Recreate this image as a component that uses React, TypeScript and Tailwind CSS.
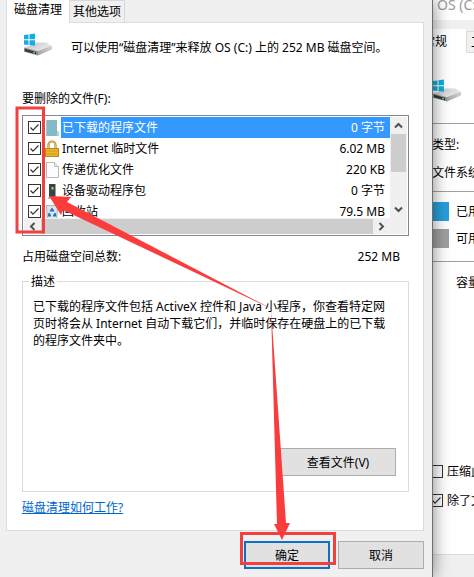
import React from 'react';

interface CleanupItem {
  id: string;
  name: string;
  size: string;
  icon: React.ReactNode;
  selected?: boolean;
}

const DriveIcon: React.FC = () => (
  <svg width="30" height="24" viewBox="0 0 30 24" className="shrink-0" aria-hidden="true">
    <defs>
      <linearGradient id="driveTop" x1="0" y1="0" x2="1" y2="0.6">
        <stop offset="0" stopColor="#c2c2c4" />
        <stop offset="1" stopColor="#ececee" />
      </linearGradient>
      <linearGradient id="driveSide" x1="0" y1="0" x2="1" y2="0">
        <stop offset="0" stopColor="#a2a2a4" />
        <stop offset="1" stopColor="#d0d0d2" />
      </linearGradient>
    </defs>
    <path d="M2 15 L14 9.500 H24 L30 13 L17 19 Z" fill="url(#driveTop)" />
    <path d="M15 18.500 L30 12.800 V16.500 L16 22.500 Z" fill="url(#driveSide)" />
    <path d="M2 14.500 L16 18.300 V22.500 L2 18.800 Z" fill="#8d8e90" />
    <path d="M3 15.800 L14 18.900 V21.300 L3 18.200 Z" fill="#333537" />
    <rect x="11" y="18.800" width="2" height="1.600" fill="#58c27a" />
    <path d="M2 2 L6.500 1.400 V6.300 H2 Z M7.500 1.200 L13 0.500 V6.300 H7.500 Z M2 7.300 H6.500 V12 L2 11.400 Z M7.500 7.300 H13 V12.800 L7.500 12.100 Z" fill="#12aee0" />
  </svg>
);

const FolderIcon = () => (
  <svg width="14" height="18" viewBox="0 0 14 18" aria-hidden="true">
    <path d="M1 1 H12 V12 L13.500 13 V17 H1 Z" fill="#83b9c4" />
    <path d="M12 11.500 L13.500 13 V17 H11.500 Z" fill="#a5cfd6" />
    <path d="M1.500 1 V17" stroke="#9bc9d1" />
  </svg>
);

const LockIcon = () => (
  <svg width="14" height="18" viewBox="0 0 14 18" aria-hidden="true">
    <path d="M3.500 9 V5 A3.500 3.500 0 0 1 10.500 5 V9" fill="none" stroke="#b0893a" strokeWidth="2.200" />
    <path d="M3.500 9 V5 A3.500 3.500 0 0 1 10.500 5 V9" fill="none" stroke="#e8cf8a" strokeWidth="0.800" />
    <rect x="0.500" y="8.500" width="13" height="8" fill="#edb92a" stroke="#b98a14" />
    <path d="M1 11 H13 M1 14 H13" stroke="#cf9a1c" />
  </svg>
);

const PageIcon = () => (
  <svg width="14" height="18" viewBox="0 0 14 18" aria-hidden="true">
    <path d="M1.500 1.500 H9.500 L13.500 5.500 V16.500 H1.500 Z" fill="#fcfcfc" stroke="#b8b8b8" />
    <path d="M9.500 1.500 V5.500 H13.500" fill="#eee" stroke="#b8b8b8" />
  </svg>
);

const DeviceIcon = () => (
  <svg width="14" height="18" viewBox="0 0 14 18" aria-hidden="true">
    <rect x="4" y="2" width="6.500" height="13" fill="#38443e" />
    <rect x="6.500" y="5" width="2" height="2.500" fill="#8fe0a4" />
    <path d="M3 16 H11" stroke="#777" />
  </svg>
);

const RecycleIcon = () => (
  <svg width="14" height="18" viewBox="0 0 14 18" aria-hidden="true">
    <path d="M1.500 2.500 H12.500 L11.800 16.500 H2.200 Z" fill="#dfe6ea" stroke="#a9b4bb" />
    <path d="M5.300 8.500 L7 6 L8.700 8.500 M10 10 L10.300 12.500 H8 M6 12.500 H3.700 L4.500 10" fill="none" stroke="#2374bd" strokeWidth="1.800" />
  </svg>
);

const cleanupItems: CleanupItem[] = [
  { id: 'downloaded', name: '已下载的程序文件', size: '0 字节', icon: <FolderIcon />, selected: true },
  { id: 'internet', name: 'Internet 临时文件', size: '6.02 MB', icon: <LockIcon /> },
  { id: 'delivery', name: '传递优化文件', size: '220 KB', icon: <PageIcon /> },
  { id: 'drivers', name: '设备驱动程序包', size: '0 字节', icon: <DeviceIcon /> },
  { id: 'recycle', name: '回收站', size: '79.5 MB', icon: <RecycleIcon /> },
];

const Checkbox: React.FC<{ id: string; checked?: boolean }> = ({ id, checked = false }) => (
  <span className="grid size-[13px] shrink-0">
    <input
      id={id}
      type="checkbox"
      defaultChecked={checked}
      className="peer col-start-1 row-start-1 size-[13px] appearance-none border border-[#333] bg-white"
    />
    <svg
      viewBox="0 0 13 13"
      className="pointer-events-none invisible col-start-1 row-start-1 size-[13px] peer-checked:visible"
      aria-hidden="true"
    >
      <path d="M2.500 6.500 L5 9.200 L10.500 3.500" fill="none" stroke="#333" strokeWidth="1.200" />
    </svg>
  </span>
);

const Chevron: React.FC<{ d: string }> = ({ d }) => (
  <svg width="9" height="9" viewBox="0 0 9 9" aria-hidden="true">
    <path d={d} fill="none" stroke="#505050" strokeWidth="2" />
  </svg>
);

const FileList = () => (
  <div className="flex h-[121px] flex-col border border-[#828790] p-px">
    <div className="flex min-h-0 flex-1">
      <ul className="min-w-0 flex-1 overflow-hidden">
        {cleanupItems.map((item) => (
          <li key={item.id} className="flex h-[21px] items-center pl-1">
            <Checkbox id={item.id} checked />
            <span className="ml-1 w-4 shrink-0">{item.icon}</span>
            <label
              htmlFor={item.id}
              className={`flex h-full flex-1 items-center justify-between pr-[5px] pl-px ${
                item.selected ? 'bg-[#3399ff] text-white' : ''
              }`}
            >
              <span>{item.name}</span>
              <span>{item.size}</span>
            </label>
          </li>
        ))}
      </ul>
      <div className="flex w-[17px] flex-col items-center justify-between bg-[#f0f0f0] pb-1">
        <button type="button" aria-label="向上滚动" className="flex h-[17px] items-center">
          <Chevron d="M1 6.500 L4.500 3 L8 6.500" />
        </button>
        <div className="mb-auto h-[38px] w-[15px] bg-[#cdcdcd]" />
        <button type="button" aria-label="向下滚动" className="flex h-[9px] items-center">
          <Chevron d="M1 2.500 L4.500 6 L8 2.500" />
        </button>
      </div>
    </div>
    <div className="flex h-4 items-center bg-[#f0f0f0] pr-[17px]">
      <button type="button" aria-label="向左滚动" className="flex w-[17px] justify-center">
        <Chevron d="M6.500 1 L3 4.500 L6.500 8" />
      </button>
      <div className="h-[15px] flex-1 bg-[#cdcdcd]" />
      <button type="button" aria-label="向右滚动" className="flex w-[17px] justify-center">
        <Chevron d="M2.500 1 L6 4.500 L2.500 8" />
      </button>
    </div>
  </div>
);

const CleanupDialog = () => (
  <main className="z-10 flex min-w-0 flex-1 flex-col border-r border-[#6e6e6e] bg-[#f0f0f0] pr-2 pl-[6px] shadow-[0_0_16px_rgba(0,0,0,0.5)]">
    <div role="tablist" className="flex h-[22px] items-end">
      <button
        type="button"
        role="tab"
        aria-selected="true"
        className="z-10 -mb-px h-[23px] border-l border-[#dcdcdc] bg-white px-[7px] pb-1"
      >
        磁盘清理
      </button>
      <button
        type="button"
        role="tab"
        aria-selected="false"
        className="h-[22px] border border-b-0 border-[#d9d9d9] bg-[#f0f0f0] px-[3px]"
      >
        其他选项
      </button>
    </div>

    <section className="flex h-[509px] flex-col border border-[#dcdcdc] bg-white pr-[14px] pl-[15px]">
      <div className="mt-[10px] flex items-center gap-[19px]">
        <DriveIcon />
        <p className="pt-1">可以使用“磁盘清理”来释放 OS (C:) 上的 252 MB 磁盘空间。</p>
      </div>

      <h2 className="mt-[33px] mb-2">要删除的文件(F):</h2>
      <FileList />

      <div className="mt-3 flex justify-between pr-[9px]">
        <span>占用磁盘空间总数:</span>
        <span>252 MB</span>
      </div>

      <fieldset className="mt-2 h-[219px] border border-[#dcdcdc] pr-3 pl-[10px]">
        <legend className="-ml-1 px-[2px]">描述</legend>
        <div className="mt-2 flex h-[178px] flex-col justify-between">
          <p className="whitespace-nowrap">
            已下载的程序文件包括 ActiveX 控件和 Java 小程序，你查看特定网
            <br />
            页时将会从 Internet 自动下载它们，并临时保存在硬盘上的已下载
            <br />
            的程序文件夹中。
          </p>
          <button
            type="button"
            className="h-7 w-[116px] shrink-0 self-end border border-[#adadad] bg-[#e1e1e1]"
          >
            查看文件(V)
          </button>
        </div>
      </fieldset>

      <a href="#help" className="mt-[7px] self-start text-[#0066cc] underline">
        磁盘清理如何工作?
      </a>
    </section>

    <div className="mt-[10px] flex justify-end gap-2">
      <button type="button" className="h-7 w-[86px] border-2 border-[#0f6fc6] bg-[#e1e1e1]">
        确定
      </button>
      <button type="button" className="h-7 w-[86px] border border-[#adadad] bg-[#e1e1e1]">
        取消
      </button>
    </div>
  </main>
);

// Properties window, mostly hidden behind the dialog
const PropertiesWindow = () => (
  <aside className="-ml-3 flex w-[53px] shrink-0 flex-col overflow-hidden bg-[#f0f0f0] whitespace-nowrap">
    <h1 className="h-5 bg-white pl-4 text-sm leading-[10px] text-[#999]">OS (C:)</h1>
    <div className="mt-[9px] flex h-6 items-end">
      <button type="button" className="h-6 w-[45px] shrink-0 bg-white pl-[2px] text-left">
        常规
      </button>
      <button type="button" className="h-[22px] border border-[#d9d9d9] bg-[#f0f0f0] px-1">
        工具
      </button>
    </div>
    <div className="h-[502px] border-b border-[#dcdcdc] bg-white">
      <div className="flex h-[71px] items-center border-b border-[#a0a0a0] pt-[6px] pl-[10px]">
        <DriveIcon />
      </div>
      <div className="flex h-[68px] flex-col gap-[11px] border-b border-[#a0a0a0] pt-3 pl-[11px]">
        <span>类型:</span>
        <span>文件系统:</span>
      </div>
      <div className="flex h-[70px] flex-col gap-2 border-b border-[#a0a0a0] pt-[10px] pl-[11px]">
        <div className="flex items-center gap-[7px]">
          <span className="h-[19px] w-[17px] shrink-0 bg-[#26a0da]" />
          已用空间:
        </div>
        <div className="flex items-center gap-[7px]">
          <span className="h-[19px] w-[17px] shrink-0 bg-[#a0a0a0]" />
          可用空间:
        </div>
      </div>
      <div className="pt-3 pl-[35px]">容量:</div>
      <div className="mt-[172px] flex flex-col gap-3 pl-[9px]">
        <div className="flex items-center gap-1">
          <Checkbox id="compress" />
          <label htmlFor="compress">压缩此驱动器</label>
        </div>
        <div className="flex items-center gap-1">
          <Checkbox id="index" checked />
          <label htmlFor="index">除了文件属性外</label>
        </div>
      </div>
    </div>
  </aside>
);

const Annotations = () => (
  <svg
    width="474"
    height="577"
    viewBox="0 0 474 577"
    className="pointer-events-none absolute top-0 left-0 z-20"
    aria-hidden="true"
  >
    <g fill="none" stroke="#f04040" strokeWidth="3">
      <rect x="17" y="108" width="26.500" height="124" />
      <rect x="241.500" y="533.500" width="93" height="30" />
    </g>
    <g fill="#fa3c3c">
      <path d="M49 196 L71 197 L67 202 L272 309 L63 210 L61 215 Z" />
      <path d="M282 540 L274 524 L277 524 L271 309 L286 523 L290 523 Z" />
    </g>
  </svg>
);

const App: React.FC = () => {
  return (
    <div className="relative flex min-h-screen overflow-hidden bg-[#f0f0f0] font-['Noto_Sans','Noto_Sans_CJK_SC',sans-serif] text-[12px] leading-[17px] text-black">
      <CleanupDialog />
      <PropertiesWindow />
      <Annotations />
    </div>
  );
};

export default App;
